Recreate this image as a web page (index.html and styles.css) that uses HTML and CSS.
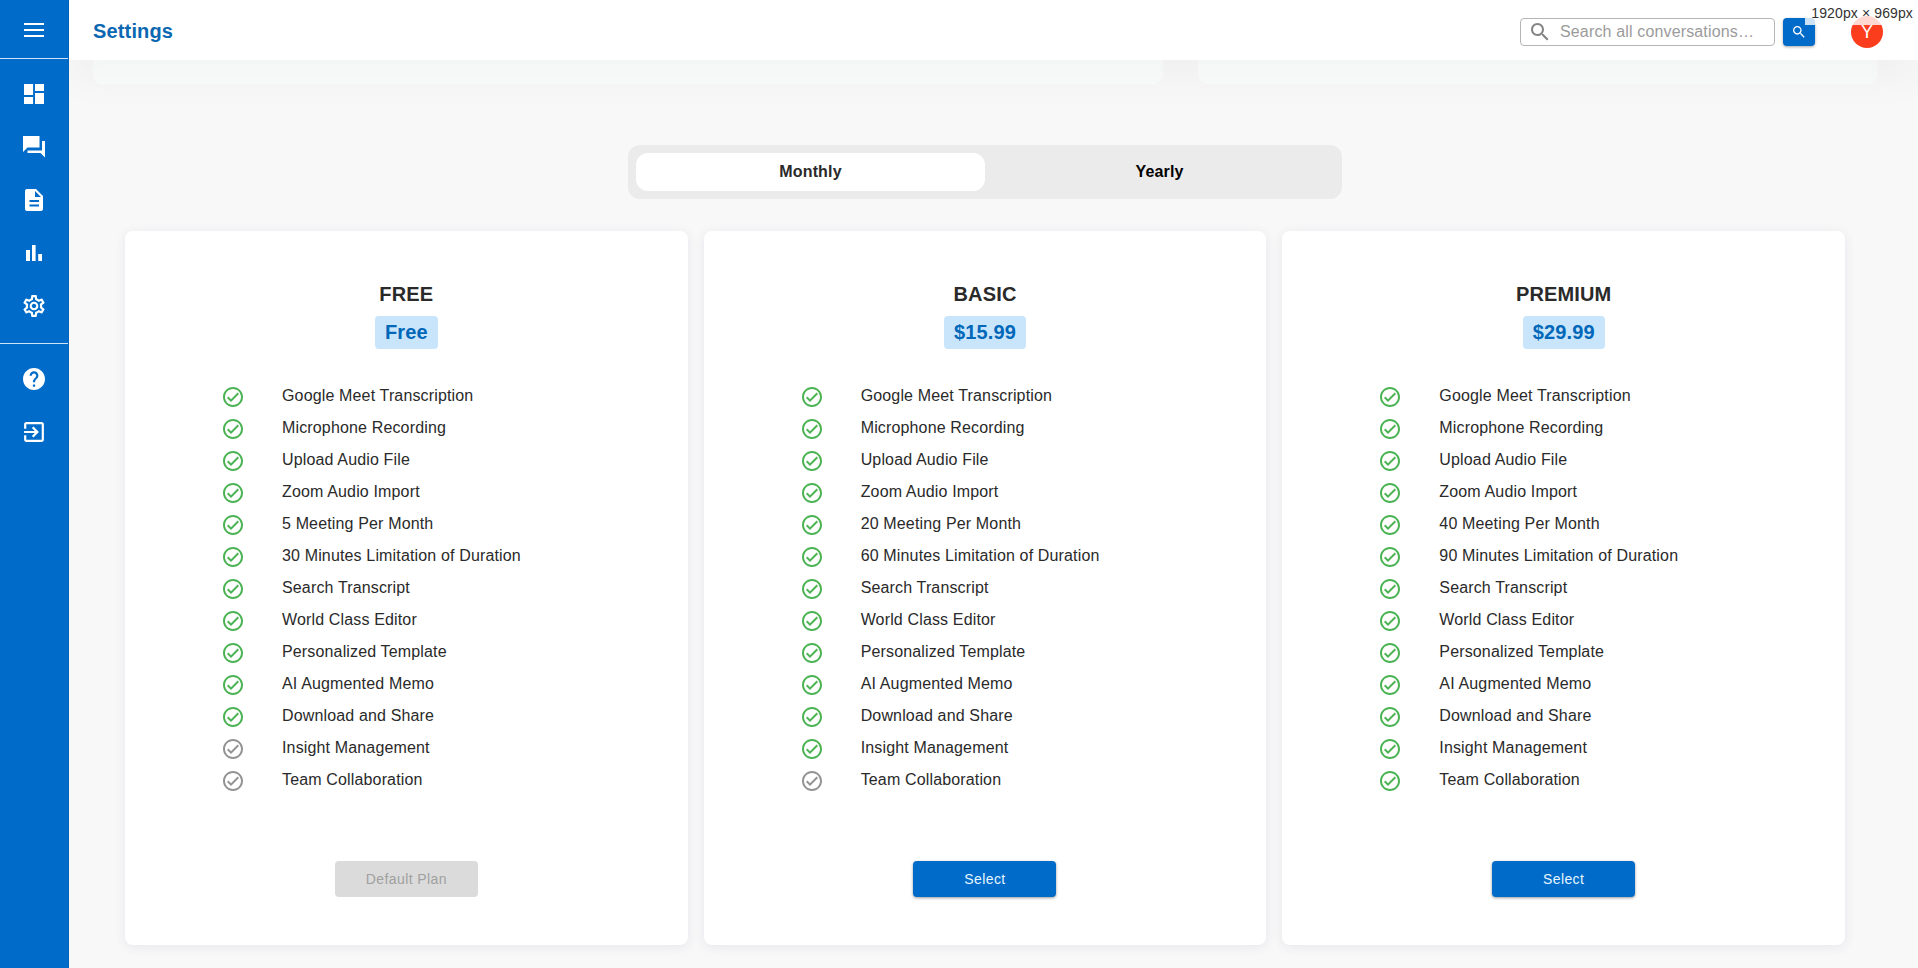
FILE: index.html
```html
<!DOCTYPE html>
<html lang="en">
<head>
<meta charset="utf-8">
<title>Settings</title>
<link rel="stylesheet" href="styles.css">
</head>
<body>
<svg class="defs" aria-hidden="true">
  <symbol id="check" viewBox="0 0 24 24"><path d="M12 2C6.48 2 2 6.48 2 12s4.48 10 10 10 10-4.48 10-10S17.52 2 12 2zm0 18c-4.41 0-8-3.59-8-8s3.59-8 8-8 8 3.590 8 8-3.590 8-8 8zm4.590-12.420L10 14.170l-2.590-2.580L6 13l4 4 8-8z"/></symbol>
  <symbol id="search" viewBox="0 0 24 24"><path d="M15.500 14h-.79l-.28-.27C15.410 12.590 16 11.110 16 9.500 16 5.910 13.090 3 9.500 3S3 5.910 3 9.500 5.910 16 9.500 16c1.610 0 3.090-.59 4.230-1.570l.27.28v.79l5 4.990L20.490 19l-4.990-5zm-6 0C7.010 14 5 11.990 5 9.500S7.010 5 9.500 5 14 7.010 14 9.500 11.990 14 9.500 14z"/></symbol>
</svg>
<div class="app">
  <nav class="sidebar">
    <div class="menu"><svg class="icon" viewBox="0 0 24 24"><path d="M2 19h20v-2H2v2zm0-6h20v-2H2v2zM2 5v2h20V5H2z"/></svg></div>
    <div class="nav-group">
      <svg class="icon" viewBox="0 0 24 24"><path d="M2 13.100h9.100V2H2v11.100zM2 22h9.100v-7.100H2V22zm11 0h9V10.900h-9V22zm0-20v7.100h9V2h-9z"/></svg>
      <svg class="icon" viewBox="0 0 24 24"><path d="M23 6h-3v9.500H5.500V18H18.500L23 22.500V6zM17.500 12.500V1H1v16l4.500-4.500z"/></svg>
      <svg class="icon" viewBox="0 0 24 24"><path d="M14 1H5c-1.100 0-2 .9-2 2v18c0 1.100.89 2 2 2h14c1.100 0 2-.9 2-2V8l-7-7zm3 17.500H7.500v-2H17v2zm0-4.500H7.500v-2H17v2zm-4-5V3l6 6h-6z"/></svg>
      <svg class="icon" viewBox="0 0 24 24"><path d="M4 9h4v11H4V9zm6-5h3.600v16H10V4zm6.200 9h3.800v7h-3.800z"/></svg>
      <svg class="icon" viewBox="0 0 24 24"><g transform="translate(-1.100 -1.100) scale(1.092)"><path d="M19.430 12.980c.04-.32.07-.64.07-.98 0-.34-.03-.66-.07-.98l2.110-1.650c.19-.15.24-.42.12-.64l-2-3.460c-.09-.16-.26-.25-.44-.25-.06 0-.12.01-.17.03l-2.490 1c-.52-.4-1.080-.73-1.690-.98l-.38-2.650C14.460 2.180 14.250 2 14 2h-4c-.25 0-.46.18-.49.42l-.38 2.650c-.61.25-1.170.59-1.690.98l-2.490-1c-.06-.02-.12-.03-.18-.03-.17 0-.34.09-.43.25l-2 3.460c-.13.22-.07.49.12.64l2.110 1.650c-.04.32-.07.65-.07.98 0 .33.03.66.07.98l-2.110 1.650c-.19.15-.24.42-.12.64l2 3.460c.09.16.26.25.44.25.06 0 .12-.01.17-.03l2.490-1c.52.4 1.080.73 1.690.98l.38 2.650c.03.24.24.42.49.42h4c.25 0 .46-.18.49-.42l.38-2.650c.61-.25 1.170-.59 1.690-.98l2.490 1c.06.02.12.03.18.03.17 0 .34-.09.43-.25l2-3.460c.12-.22.07-.49-.12-.64l-2.110-1.650zm-1.980-1.710c.04.31.05.52.05.73 0 .21-.02.43-.05.73l-.14 1.130.89.7 1.080.84-.7 1.210-1.270-.51-1.040-.42-.9.680c-.43.32-.84.56-1.250.73l-1.060.43-.16 1.130-.2 1.350h-1.400l-.19-1.350-.16-1.130-1.060-.43c-.43-.18-.83-.41-1.230-.71l-.91-.7-1.060.43-1.270.51-.7-1.210 1.080-.84.89-.7-.14-1.130c-.03-.31-.05-.54-.05-.74s.02-.43.05-.73l.14-1.130-.89-.7-1.080-.84.7-1.210 1.270.51 1.040.42.9-.68c.43-.32.84-.56 1.250-.73l1.060-.43.16-1.130.2-1.350h1.390l.19 1.350.16 1.130 1.060.43c.43.18.83.41 1.230.71l.91.7 1.060-.43 1.270-.51.7 1.210-1.070.85-.89.7.14 1.130zM12 8c-2.210 0-4 1.790-4 4s1.790 4 4 4 4-1.790 4-4-1.790-4-4-4zm0 6c-1.100 0-2-.9-2-2s.9-2 2-2 2 .9 2 2-.9 2-2 2z"/></g></svg>
    </div>
    <div class="nav-group nav-lower">
      <svg class="icon" viewBox="0 0 24 24"><g transform="translate(-1.200 -1.200) scale(1.100)"><path d="M12 2C6.480 2 2 6.480 2 12s4.480 10 10 10 10-4.480 10-10S17.520 2 12 2zm1 17h-2v-2h2v2zm2.070-7.750l-.9.920C13.450 12.900 13 13.500 13 15h-2v-.5c0-1.100.45-2.100 1.170-2.830l1.240-1.260c.37-.36.59-.86.59-1.410 0-1.100-.9-2-2-2s-2 .9-2 2H8c0-2.210 1.790-4 4-4s4 1.790 4 4c0 .88-.36 1.680-.93 2.250z"/></g></svg>
      <svg class="icon" viewBox="0 0 24 24"><g transform="translate(-1.200 -1.200) scale(1.100)"><path d="M10.090 15.590L11.500 17l5-5-5-5-1.410 1.410L12.670 11H3v2h9.670l-2.580 2.590zM19 3H5c-1.110 0-2 .9-2 2v4h2V5h14v14H5v-4H3v4c0 1.100.89 2 2 2h14c1.100 0 2-.9 2-2V5c0-1.100-.9-2-2-2z"/></g></svg>
    </div>
  </nav>
  <div class="page">
    <header class="topbar">
      <h1 class="title">Settings</h1>
      <div class="search"><svg class="search-icon"><use href="#search"/></svg><span>Search all conversations…</span></div>
      <div class="search-btn"><svg class="search-btn-icon"><use href="#search"/></svg></div>
      <div class="avatar">Y</div>
    </header>
    <div class="upper"><div class="panel"></div><div class="panel"></div></div>
    <main class="pricing">
      <div class="toggle"><div class="option selected">Monthly</div><div class="option">Yearly</div></div>
      <div class="plans" id="plans"></div>
    </main>
  </div>
</div>
<div class="size-label">1920px × 969px</div>
<script src="plans.js"></script>
</body>
</html>
```
FILE: styles.css
```css
* { box-sizing: border-box; }
body {
  margin: 0;
  height: 968px;
  overflow: hidden;
  background: #f8f8f8;
  color: #2a2a2a;
  font: 16px/24px "Liberation Sans", Arial, sans-serif;
  letter-spacing: 0.15px;
}
svg { display: block; fill: currentColor; }
.defs { position: absolute; width: 0; height: 0; }
.app { display: flex; height: 968px; }
.sidebar {
  position: relative;
  z-index: 3;
  width: 69px;
  flex: none;
  background: #006bc9;
  color: #fff;
  border-right: 1px solid #0062b8;
}
.icon { width: 24px; height: 24px; }
.menu {
  height: 59px;
  padding: 18px 0 0 22px;
  border-bottom: 1px solid #cfe3f5;
}
.nav-group {
  display: flex;
  flex-direction: column;
  gap: 29px;
  padding: 23px 0 0 22px;
  height: 285px;
  border-bottom: 1px solid #cfe3f5;
}
.nav-lower { border-bottom: 0; }
.page { flex: 1; min-width: 0; }
.topbar {
  position: relative;
  z-index: 2;
  display: flex;
  align-items: center;
  height: 60px;
  padding: 3px 35px 0 24px;
  background: #fff;
  box-shadow: 0 20px 40px rgba(0, 0, 0, 0.035);
}
.title {
  margin: 0 auto 2px 0;
  font-size: 20px;
  line-height: 24px;
  color: #0b67b2;
}
.search {
  display: flex;
  align-items: center;
  width: 255px;
  height: 28px;
  padding-left: 7px;
  border: 1px solid #b5b5b5;
  border-radius: 4px;
  color: #9b9b9b;
}
.search-icon { width: 24px; height: 24px; margin-right: 8px; color: #858585; }
.search-btn {
  display: flex;
  align-items: center;
  justify-content: center;
  width: 32px;
  height: 28px;
  margin: 0 36px 0 8px;
  border-radius: 4px;
  background: #006bc9;
  color: #fff;
  box-shadow: 0 1px 3px rgba(0, 0, 0, 0.35);
}
.search-btn-icon { width: 16px; height: 16px; }
.avatar {
  width: 32px;
  height: 32px;
  border-radius: 50%;
  background: #fc3d1d;
  color: #fff;
  font-size: 18px;
  line-height: 32px;
  text-align: center;
}
.upper {
  display: grid;
  grid-template-columns: 1070px 679px;
  gap: 35px;
  height: 24px;
  padding-left: 24px;
}
.panel { background: #fbfcfc; border-radius: 0 0 10px 10px; }
.pricing { padding: 61px 73px 0 56px; }
.toggle {
  display: flex;
  width: 714px;
  height: 54px;
  margin: 0 auto 32px;
  padding: 8px;
  border-radius: 12px;
  background: #ebebeb;
  color: #000;
  font-weight: 700;
}
.option { flex: 1; line-height: 38px; text-align: center; border-radius: 12px; }
.selected { background: #fff; color: #2a2a2a; }
.plans { display: grid; grid-template-columns: repeat(3, 1fr); gap: 16px; }
.plan {
  display: flex;
  flex-direction: column;
  align-items: center;
  height: 714px;
  padding-top: 47px;
  border-radius: 8px;
  background: #fff;
  box-shadow: 0 2px 12px rgba(50, 60, 130, 0.09);
}
.plan-name { margin: 0; font-size: 20px; line-height: 32px; }
.price {
  height: 33px;
  margin: 6px 0 32px;
  padding: 0 10px;
  border-radius: 4px;
  background: #c9e5fb;
  color: #0067b9;
  font-size: 20px;
  font-weight: 700;
  line-height: 33px;
}
.features { align-self: stretch; margin: 0; padding: 0 0 0 96px; list-style: none; }
.feature { display: flex; height: 32px; line-height: 30px; }
.check { width: 24px; height: 24px; margin: 4px 37px 0 0; color: #4bb353; }
.check.off { color: #939393; }
.button {
  width: 143px;
  height: 36px;
  margin-top: 64px;
  border-radius: 4px;
  background: #006bc9;
  color: #e6f7ff;
  font-size: 14px;
  line-height: 36px;
  letter-spacing: 0.4px;
  text-align: center;
  box-shadow: 0 1px 3px rgba(0, 0, 0, 0.4);
}
.button.disabled { background: #dbdbdb; color: #a0a0a0; box-shadow: none; }
.size-label {
  position: absolute;
  z-index: 4;
  top: 0;
  right: 0;
  width: 113px;
  height: 25px;
  padding-right: 5px;
  background: rgba(255, 255, 255, 0.8);
  color: #333;
  font-size: 14px;
  line-height: 26px;
  letter-spacing: 0.12px;
  text-align: right;
  white-space: nowrap;
}
```
FILE: plans.js
```js
const plans = [
  { name: 'FREE', price: 'Free', meetings: 5, minutes: 30, included: 11, button: 'Default Plan', disabled: true },
  { name: 'BASIC', price: '$15.99', meetings: 20, minutes: 60, included: 12, button: 'Select' },
  { name: 'PREMIUM', price: '$29.99', meetings: 40, minutes: 90, included: 13, button: 'Select' }
];

const featuresOf = (plan) => [
  'Google Meet Transcription', 'Microphone Recording', 'Upload Audio File', 'Zoom Audio Import',
  `${plan.meetings} Meeting Per Month`, `${plan.minutes} Minutes Limitation of Duration`,
  'Search Transcript', 'World Class Editor', 'Personalized Template', 'AI Augmented Memo',
  'Download and Share', 'Insight Management', 'Team Collaboration'
];

document.getElementById('plans').innerHTML = plans.map((plan) => `
  <section class="plan">
    <h2 class="plan-name">${plan.name}</h2>
    <div class="price">${plan.price}</div>
    <ul class="features">${featuresOf(plan).map((text, i) => `
      <li class="feature"><svg class="check${i < plan.included ? '' : ' off'}"><use href="#check"/></svg>${text}</li>`).join('')}
    </ul>
    <div class="button${plan.disabled ? ' disabled' : ''}">${plan.button}</div>
  </section>`).join('');
```
